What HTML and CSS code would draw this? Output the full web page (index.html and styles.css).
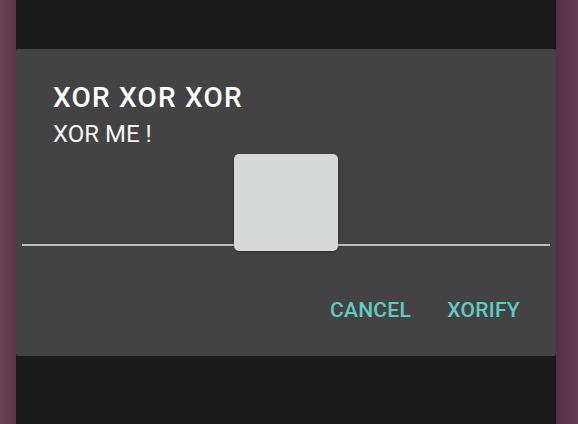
FILE: index.html
```html
<!DOCTYPE html>
<html lang="en">
<head>
    <meta charset="UTF-8">
    <title>XOR</title>
    <link rel="stylesheet" href="styles.css">
</head>
<body>
    <div class="side side-left"></div>

    <div class="screen">
        <div class="dialog">
            <h1 class="dialog-title">XOR XOR XOR</h1>
            <p class="dialog-message">XOR ME !</p>

            <div class="seekbar">
                <div class="track"></div>
                <div class="thumb" style="left: 218px;"></div>
            </div>

            <div class="actions">
                <button class="action">CANCEL</button>
                <button class="action">XORIFY</button>
            </div>
        </div>
    </div>

    <div class="side side-right"></div>
</body>
</html>
```

FILE: styles.css
```css
body {
    margin: 0;
    padding: 0;
    height: 424px;
    display: flex;
    font-family: Roboto, "Noto Sans", sans-serif;
    background-color: #1b1b1b;
    overflow: hidden;
}
.side {
    height: 100%;
}
.side-left {
    width: 16px;
    background: linear-gradient(to right, #6a4352, #5e3647);
}
.side-right {
    width: 22px;
    background: linear-gradient(to right, #5a2f44, #633b4e);
}
.screen {
    width: 540px;
    padding-top: 49px;
    background-color: #1b1b1b;
}
.dialog {
    height: 307px;
    background-color: #434343;
    border-radius: 2px;
    padding-top: 33px;
    box-sizing: border-box;
}
.dialog-title {
    margin: 0 0 6px 37px;
    font-size: 28px;
    line-height: 32px;
    font-weight: 500;
    letter-spacing: 1.2px;
    color: #ffffff;
}
.dialog-message {
    margin: 0 0 0 37px;
    font-size: 24px;
    line-height: 28px;
    color: #f5f5f5;
}
.seekbar {
    position: relative;
    height: 97px;
    margin-top: 6px;
}
.track {
    position: absolute;
    left: 6px;
    right: 6px;
    top: 90px;
    height: 2px;
    background-color: #bdbdbd;
}
.thumb {
    position: absolute;
    top: 0;
    width: 104px;
    height: 97px;
    border-radius: 5px;
    background-color: #d7d9d8;
    box-shadow: 0 1px 3px rgba(0,0,0,0.4);
}
.actions {
    display: flex;
    justify-content: flex-end;
    padding: 41px 18px 0 0;
}
.action {
    background: none;
    border: none;
    padding: 6px 18px;
    font-family: Roboto, sans-serif;
    font-size: 21px;
    font-weight: 500;
    line-height: 24px;
    letter-spacing: 0.3px;
    color: #5fcdc1;
}
```
